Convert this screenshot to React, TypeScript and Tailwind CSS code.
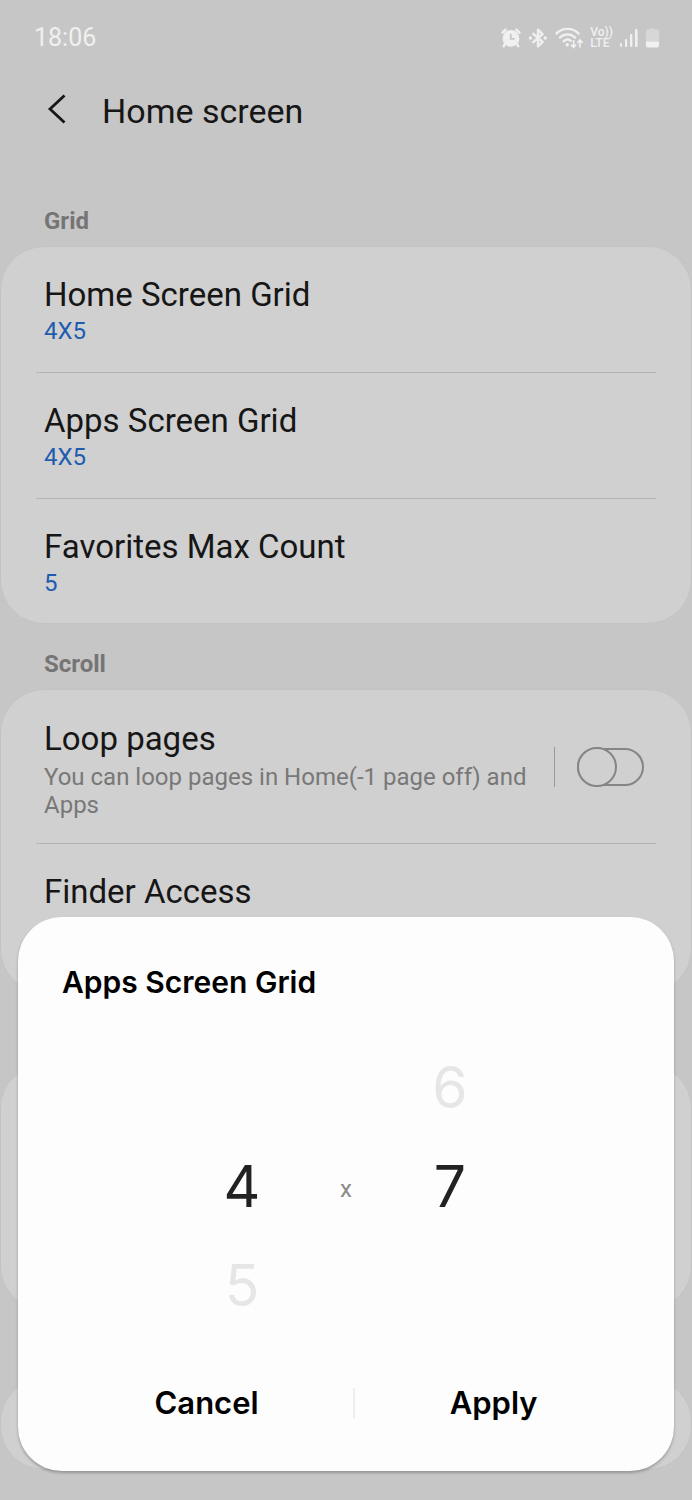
import { useState } from "react";

function StatusBar() {
  return (
    <div className="flex h-[76px] items-center justify-between pr-8 pl-[34px] text-[#f0f0f0]">
      <span className="text-[25px] leading-8">18:06</span>
      <div className="flex items-center gap-[7px]">
        <svg width="20" height="20" viewBox="0 0 20 20" aria-label="Alarm">
          <g stroke="currentColor" strokeWidth="2.6" strokeLinecap="round">
            <path d="M1.6 4.6 4.6 1.8M18.400 4.600 15.400 1.800M4 16 2.800 18.200M16 16 17.200 18.200" />
          </g>
          <circle cx="10" cy="10.4" r="8.4" fill="currentColor" />
          <path d="M9.8 5.8v5h3.8" fill="none" stroke="#c6c6c6" strokeWidth="1.7" />
        </svg>
        <svg width="20" height="20" viewBox="0 0 20 20" fill="none" aria-label="Bluetooth">
          <path
            d="M4.5 5.2 14.6 14 10 18.4V1.6L14.6 6 4.5 14.8"
            stroke="currentColor"
            strokeWidth="2.4"
            strokeLinejoin="round"
          />
          <circle cx="2.4" cy="10" r="1.7" fill="currentColor" />
          <circle cx="17.2" cy="10" r="1.7" fill="currentColor" />
        </svg>
        <svg width="28" height="22" viewBox="0 0 28 22" fill="none" aria-label="Wi-Fi">
          <g stroke="currentColor" strokeWidth="2.3" strokeLinecap="round">
            <path d="M1.4 6.6C7.6.4 17.4.4 23.6 6.6" />
            <path d="M4.9 10.6c4.4-4.2 10.8-4.2 15.2 0" />
            <path d="M8.6 14.3c2.3-2.1 5.1-2.1 7.2-.6" />
          </g>
          <circle cx="12.2" cy="17.8" r="1.7" fill="currentColor" />
          <path
            d="M18.6 13v7M16 17.6l2.6 2.8 2.6-2.8M25 20.4v-7M22.4 15.8 25 13l2.6 2.8"
            stroke="currentColor"
            strokeWidth="1.7"
          />
        </svg>
        <span className="flex flex-col text-xs leading-[11px] font-medium">
          <span>Vo))</span>
          <span>LTE</span>
        </span>
        <svg width="18" height="20" viewBox="0 0 18 20" fill="currentColor" aria-label="Signal">
          <rect x="0" y="15" width="2" height="4" rx="1" />
          <rect x="5" y="11" width="2.2" height="8" rx="1" />
          <rect x="10" y="6" width="2.4" height="13" rx="1" />
          <rect x="15" y="1" width="2.6" height="18" rx="1" />
        </svg>
        <svg width="15" height="20" viewBox="0 0 15 20" fill="currentColor" aria-label="Battery">
          <path
            d="M4.5 1.6Q4.5.4 5.7.4h3.6q1.2 0 1.2 1.2h1.6q2 0 2 2v9.9H.9V3.6q0-2 2-2z"
            opacity="0.4"
          />
          <path d="M.9 13.5h13.2v4q0 2-2 2H2.9q-2 0-2-2z" />
        </svg>
      </div>
    </div>
  );
}

interface SettingRowProps {
  readonly title: string;
  readonly value?: string;
  readonly last?: boolean;
}

function SettingRow({ title, value, last }: SettingRowProps) {
  return (
    <button
      type="button"
      className={`mx-9 flex flex-col gap-0.5 px-2 pt-7 text-left ${
        last ? "h-[125px]" : "h-[126px] border-b border-[#b4b4b4]"
      }`}
    >
      <span className="text-[33px] leading-10 text-[#161616]">{title}</span>
      {value && <span className="text-2xl leading-7 text-[#1f5cb0]">{value}</span>}
    </button>
  );
}

function SectionLabel({ children }: { readonly children: string }) {
  return (
    <h2 className="flex h-[65px] items-center px-11 pt-4 text-2xl font-bold text-[#757575]">
      <span className="pb-0.5">{children}</span>
    </h2>
  );
}

const cardClass =
  "flex flex-col rounded-[44px] bg-[#d0d0d0] pt-px ring-1 ring-inset ring-[#c2c2c2]";

function LoopPagesRow() {
  const [enabled, setEnabled] = useState(false);
  return (
    <div className="mx-9 flex h-[154px] items-center border-b border-[#b4b4b4] pr-3 pl-2">
      <label htmlFor="loop-pages" className="flex flex-1 flex-col gap-1 pt-1">
        <span className="text-[33px] leading-10 text-[#161616]">Loop pages</span>
        <span className="text-2xl leading-7 text-[#787878]">
          You can loop pages in Home(-1 page off) and Apps
        </span>
      </label>
      <span className="mr-[22px] ml-6 h-10 w-px bg-[#999999]" />
      <input
        id="loop-pages"
        type="checkbox"
        role="switch"
        checked={enabled}
        onChange={(e) => setEnabled(e.target.checked)}
        className="flex h-[38px] w-[67px] shrink-0 appearance-none items-center rounded-full border-2 border-[#858585] before:-ml-[2px] before:size-10 before:shrink-0 before:rounded-full before:border-2 before:border-[#858585] before:bg-[#d0d0d0] checked:justify-end"
      />
    </div>
  );
}

interface WheelProps {
  readonly label: string;
  readonly value: number;
  readonly min: number;
  readonly max: number;
  readonly onChange: (value: number) => void;
}

function Wheel({ label, value, min, max, onChange }: WheelProps) {
  const step = "h-[99px] w-full text-[57px] text-[#e6e6e6]";
  return (
    <div className="flex w-[104px] flex-col">
      {value > min ? (
        <button type="button" className={step} onClick={() => onChange(value - 1)}>
          {value - 1}
        </button>
      ) : (
        <span className={step} />
      )}
      <input
        type="text"
        inputMode="numeric"
        aria-label={label}
        value={value}
        readOnly
        className="h-[99px] w-full bg-transparent text-center text-[57px] text-[#222222] outline-none"
      />
      {value < max ? (
        <button type="button" className={step} onClick={() => onChange(value + 1)}>
          {value + 1}
        </button>
      ) : (
        <span className={step} />
      )}
    </div>
  );
}

function GridDialog() {
  const [columns, setColumns] = useState(4);
  const [rows, setRows] = useState(7);
  return (
    <div
      role="dialog"
      aria-labelledby="dialog-title"
      className="absolute inset-x-[18px] bottom-[29px] rounded-[44px] bg-[#fdfdfd] pt-[43px] pb-9 font-['Inter',sans-serif] shadow-[0_2px_3px_rgba(0,0,0,0.25)]"
    >
      <h2
        id="dialog-title"
        className="px-11 text-[30px] leading-[44px] font-semibold text-black"
      >
        Apps Screen Grid
      </h2>
      <div className="mt-[34px] flex items-center justify-center">
        <Wheel label="Columns" value={columns} min={4} max={8} onChange={setColumns} />
        <span className="w-[104px] pt-1 text-center font-['Roboto',sans-serif] text-2xl text-[#8a8a8a]">
          x
        </span>
        <Wheel label="Rows" value={rows} min={4} max={7} onChange={setRows} />
      </div>
      <div className="mx-[42px] mt-9 flex items-center text-[31px] leading-[64px] font-semibold text-black">
        <button type="button" className="flex-auto">
          Cancel
        </button>
        <span className="h-[30px] w-[2px] bg-[#eeeeee]" />
        <button type="button" className="flex-auto">
          Apply
        </button>
      </div>
    </div>
  );
}

export default function App() {
  return (
    <div className="relative min-h-screen bg-[#c6c6c6] pb-[30px] font-['Roboto',sans-serif]">
      <StatusBar />
      <header className="flex h-[105px] items-start gap-[34px] pl-[46px]">
        <button type="button" aria-label="Back" className="mt-[17px]">
          <svg width="22" height="32" viewBox="0 0 22 32" fill="none">
            <path d="M18.5 2.5 4 16l14.5 13.5" stroke="#161616" strokeWidth="2.8" />
          </svg>
        </button>
        <h1 className="mt-[15px] text-[34px] leading-10 text-[#161616]">Home screen</h1>
      </header>
      <main>
        <SectionLabel>Grid</SectionLabel>
        <section className={cardClass}>
          <SettingRow title="Home Screen Grid" value="4X5" />
          <SettingRow title="Apps Screen Grid" value="4X5" />
          <SettingRow title="Favorites Max Count" value="5" last />
        </section>
        <SectionLabel>Scroll</SectionLabel>
        <section className={`${cardClass} pb-6`}>
          <LoopPagesRow />
          <SettingRow title="Finder Access" last />
        </section>
        {/* Cards that sit behind the dialog */}
        <div className={`${cardClass} mt-[71px] h-[246px]`} />
        <div className={`${cardClass} mt-[68px] h-[92px]`} />
      </main>
      <GridDialog />
    </div>
  );
}
